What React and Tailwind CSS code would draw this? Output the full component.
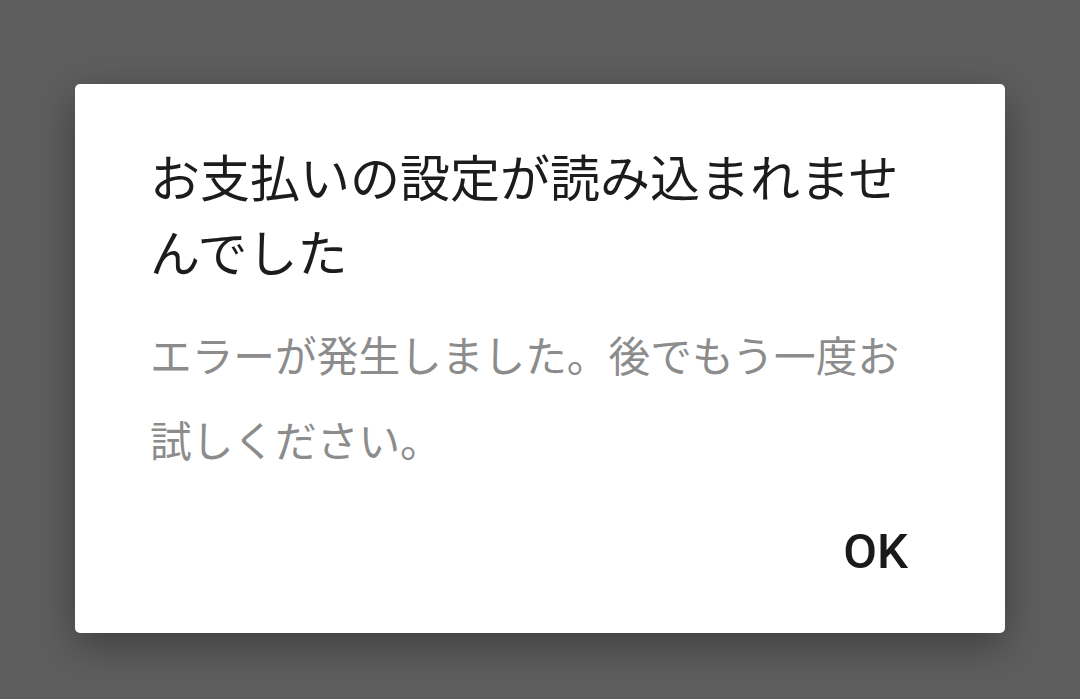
import React from 'react';

const App = () => {
    return (
        <div className="w-[1080px] h-[699px] bg-[#5e5e5e] flex justify-center pt-[84px] overflow-hidden" style={{ fontFamily: '"Noto Sans CJK JP", "Noto Sans", sans-serif' }}>
            {/* Dialog */}
            <div className="w-[930px] h-[549px] bg-white rounded-[5px] shadow-[0_12px_40px_rgba(0,0,0,0.35)] pt-[54px] px-[75px] flex flex-col">
                <h1 className="text-[50px] leading-[75px] text-[#1c1c1c] font-normal">
                    お支払いの設定が読み込まれませんでした
                </h1>
                <p className="mt-[24px] text-[41.7px] leading-[85px] text-[#8c8c8c]">
                    エラーが発生しました。後でもう一度お試しください。
                </p>
                <div className="flex justify-end mt-[30px] mr-[22px]">
                    <button
                        className="h-[80px] text-[49px] font-medium text-[#1a1a1a]"
                        style={{ fontFamily: 'Roboto, Arial, sans-serif' }}
                    >
                        OK
                    </button>
                </div>
            </div>
        </div>
    );
};

export default App;
